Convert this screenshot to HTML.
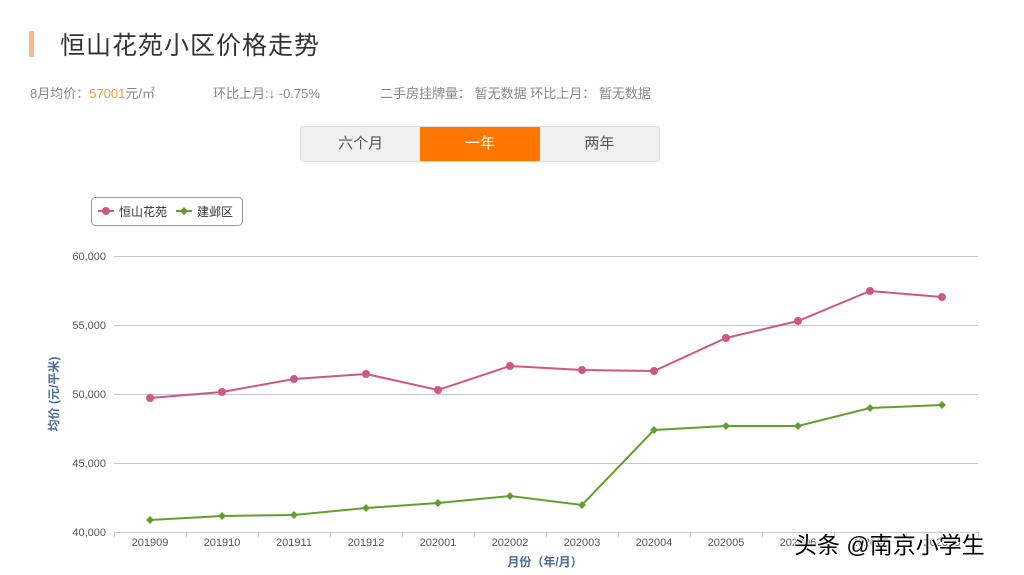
<!DOCTYPE html>
<html><head><meta charset="utf-8"><style>
body{margin:0;width:1024px;height:575px;background:#fff;overflow:hidden;position:relative;font-family:"Liberation Sans","Noto Sans CJK SC",sans-serif}
.bar{position:absolute;left:29px;top:31px;width:5px;height:26px;background:#f5b98a}
.title{position:absolute;left:60px;top:26px;font-size:25px;color:#333;letter-spacing:1px}
.info{position:absolute;top:83px;font-size:13px;color:#888}
.tabs{position:absolute;left:300px;top:126px;width:358px;height:34px;border:1px solid #ddd;border-radius:3px;background:#f0f0f0;display:flex;font-size:15px;color:#555}
.tabs div{flex:1;text-align:center;line-height:34px}
.tabs .on{background:#ff7700;color:#fff}
</style></head><body>
<div class="bar"></div>
<div class="title">恒山花苑小区价格走势</div>
<div class="info" style="left:30px">8月均价：<span style="color:#f0a030">57001</span>元/㎡</div>
<div class="info" style="left:213px">环比上月:<span style="color:#3a3">↓</span> -0.75%</div>
<div class="info" style="left:380px">二手房挂牌量： 暂无数据 环比上月： 暂无数据</div>
<div class="tabs"><div>六个月</div><div class="on">一年</div><div>两年</div></div>
<svg width="1024" height="575" style="position:absolute;left:0;top:0" font-family="Liberation Sans,Noto Sans CJK SC,sans-serif">
<rect x="91.5" y="197.5" width="151" height="28" rx="4" fill="#fff" stroke="#999"/>
<line x1="98" y1="211" x2="114" y2="211" stroke="#d0587e" stroke-width="2"/><circle cx="106" cy="211" r="4" fill="#d0587e"/>
<text x="119" y="216" font-size="12" fill="#333">恒山花苑</text>
<line x1="176" y1="211" x2="192" y2="211" stroke="#62a02e" stroke-width="2"/><path d="M184 207L188 211L184 215L180 211Z" fill="#62a02e"/>
<text x="197" y="216" font-size="12" fill="#333">建邺区</text>
<g stroke="#c8c8c8" stroke-width="1">
<line x1="114" y1="256.5" x2="978" y2="256.5"/><line x1="114" y1="325.5" x2="978" y2="325.5"/><line x1="114" y1="394.5" x2="978" y2="394.5"/><line x1="114" y1="463.5" x2="978" y2="463.5"/><line x1="114" y1="532.5" x2="978" y2="532.5"/>
<path d="M114.5 532v5M186.5 532v5M258.5 532v5M330.5 532v5M402.5 532v5M474.5 532v5M546.5 532v5M618.5 532v5M690.5 532v5M762.5 532v5M834.5 532v5M906.5 532v5M978.5 532v5"/>
</g>
<g font-size="11" fill="#555" text-anchor="end">
<text x="106" y="260">60,000</text><text x="106" y="329">55,000</text><text x="106" y="398">50,000</text><text x="106" y="467">45,000</text><text x="106" y="536">40,000</text>
</g>
<g font-size="11" fill="#555" text-anchor="middle">
<text x="150" y="546">201909</text><text x="222" y="546">201910</text><text x="294" y="546">201911</text><text x="366" y="546">201912</text><text x="438" y="546">202001</text><text x="510" y="546">202002</text><text x="582" y="546">202003</text><text x="654" y="546">202004</text><text x="726" y="546">202005</text><text x="798" y="546">202006</text><text x="870" y="546">202007</text><text x="942" y="546">202008</text>
</g>
<text x="545" y="566" font-size="12" fill="#4a6a9a" text-anchor="middle" font-weight="bold">月份（年/月）</text>
<text transform="translate(58,394) rotate(-90)" font-size="12" fill="#4a6a9a" text-anchor="middle" font-weight="bold">均价 (元/平米)</text>
<polyline fill="none" stroke="#d0587e" stroke-width="2" points="150,398 222,392 294,379 366,374 438,390 510,366 582,370 654,371 726,338 798,321 870,291 942,297"/>
<g fill="#d0587e"><circle cx="150" cy="398" r="4"/><circle cx="222" cy="392" r="4"/><circle cx="294" cy="379" r="4"/><circle cx="366" cy="374" r="4"/><circle cx="438" cy="390" r="4"/><circle cx="510" cy="366" r="4"/><circle cx="582" cy="370" r="4"/><circle cx="654" cy="371" r="4"/><circle cx="726" cy="338" r="4"/><circle cx="798" cy="321" r="4"/><circle cx="870" cy="291" r="4"/><circle cx="942" cy="297" r="4"/></g>
<polyline fill="none" stroke="#62a02e" stroke-width="2" points="150,520 222,516 294,515 366,508 438,503 510,496 582,505 654,430 726,426 798,426 870,408 942,405"/>
<g fill="#62a02e">
<path d="M150 516l4 4-4 4-4-4z"/><path d="M222 512l4 4-4 4-4-4z"/><path d="M294 511l4 4-4 4-4-4z"/><path d="M366 504l4 4-4 4-4-4z"/><path d="M438 499l4 4-4 4-4-4z"/><path d="M510 492l4 4-4 4-4-4z"/><path d="M582 501l4 4-4 4-4-4z"/><path d="M654 426l4 4-4 4-4-4z"/><path d="M726 422l4 4-4 4-4-4z"/><path d="M798 422l4 4-4 4-4-4z"/><path d="M870 404l4 4-4 4-4-4z"/><path d="M942 401l4 4-4 4-4-4z"/>
</g>
<text x="794" y="553" font-size="23" fill="#000" stroke="#fff" stroke-width="2" paint-order="stroke">头条 @南京小学生</text>
</svg>
</body></html>
